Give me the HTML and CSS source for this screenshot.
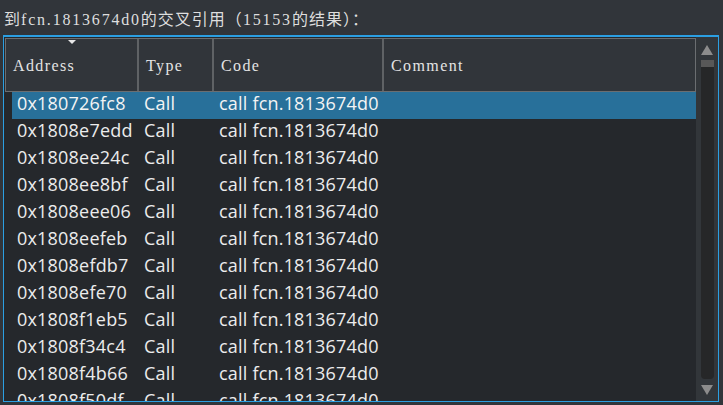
FILE: index.html
```html
<!DOCTYPE html>
<html>
<head>
<meta charset="utf-8">
<link rel="stylesheet" href="styles.css">
</head>
<body>
<div class="title">到<span class="lat">fcn.1813674d0</span>的交叉引用（<span class="lat">15153</span>的结果）：</div>
<div class="frame">
  <div class="table">
    <div class="header">
      <div class="hcell sorted">Address<span class="sort"></span></div>
      <div class="hcell">Type</div>
      <div class="hcell">Code</div>
      <div class="hcell">Comment</div>
    </div>
    <div class="body">
      <div class="row selected"><span>0x180726fc8</span><span>Call</span><span>call fcn.1813674d0</span><span></span></div>
      <div class="row"><span>0x1808e7edd</span><span>Call</span><span>call fcn.1813674d0</span><span></span></div>
      <div class="row"><span>0x1808ee24c</span><span>Call</span><span>call fcn.1813674d0</span><span></span></div>
      <div class="row"><span>0x1808ee8bf</span><span>Call</span><span>call fcn.1813674d0</span><span></span></div>
      <div class="row"><span>0x1808eee06</span><span>Call</span><span>call fcn.1813674d0</span><span></span></div>
      <div class="row"><span>0x1808eefeb</span><span>Call</span><span>call fcn.1813674d0</span><span></span></div>
      <div class="row"><span>0x1808efdb7</span><span>Call</span><span>call fcn.1813674d0</span><span></span></div>
      <div class="row"><span>0x1808efe70</span><span>Call</span><span>call fcn.1813674d0</span><span></span></div>
      <div class="row"><span>0x1808f1eb5</span><span>Call</span><span>call fcn.1813674d0</span><span></span></div>
      <div class="row"><span>0x1808f34c4</span><span>Call</span><span>call fcn.1813674d0</span><span></span></div>
      <div class="row"><span>0x1808f4b66</span><span>Call</span><span>call fcn.1813674d0</span><span></span></div>
      <div class="row"><span>0x1808f50df</span><span>Call</span><span>call fcn.1813674d0</span><span></span></div>
    </div>
  </div>
  <div class="scrollbar">
    <div class="arrow up"></div>
    <div class="track"><div class="thumb"></div></div>
    <div class="arrow down"></div>
  </div>
</div>
</body>
</html>
```
FILE: styles.css
```css
* { box-sizing: border-box; }
html, body { margin: 0; padding: 0; }
body {
  width: 723px;
  height: 405px;
  background: #31353a;
  overflow: hidden;
}
.title {
  height: 36px;
  padding: 4px 0 0 4px;
  line-height: 32px;
  font-family: "Liberation Serif", "Noto Sans CJK SC", serif;
  font-size: 16px;
  letter-spacing: 1px;
  color: #dedede;
  white-space: nowrap;
}
.title .lat { letter-spacing: 1.8px; }
.frame {
  margin-left: 3px;
  width: 716px;
  height: 367px;
  border: 1px solid #2b9fe2;
  border-top-width: 2px;
  margin-top: -1px;
  display: grid;
  grid-template-columns: 1fr 22px;
  background: #25282c;
}
.table {
  display: flex;
  flex-direction: column;
  min-height: 0;
  overflow: hidden;
}
.header {
  margin: 1px 0 0 1px;
  height: 54px;
  flex: none;
  border: 1px solid #6b6e71;
  background: #31353a;
  display: grid;
  grid-template-columns: 131px 75px 170px 1fr;
}
.hcell {
  position: relative;
  display: flex;
  align-items: center;
  padding-left: 7px;
  padding-top: 1px;
  border-left: 2px solid #5f6265;
  font-family: "Liberation Serif", serif;
  font-size: 16px;
  letter-spacing: 1.4px;
  color: #e4e4e4;
}
.hcell:first-child { border-left: none; padding-left: 7px; }
.sort {
  position: absolute;
  top: 1px;
  left: 62px;
  width: 0;
  height: 0;
  border-left: 4px solid transparent;
  border-right: 4px solid transparent;
  border-top: 4px solid #e8e8e8;
}
.body {
  flex: 1;
  min-height: 0;
  overflow: hidden;
  padding-left: 8px;
}
.row {
  display: grid;
  grid-template-columns: 126px 75px 170px 1fr;
  height: 27px;
  padding-bottom: 4px;
  line-height: 23px;
  font-family: "Open Sans", sans-serif;
  font-size: 18px;
  letter-spacing: 0.2px;
  color: #ececec;
  white-space: nowrap;
}
.row span { padding-left: 6px; }
.row span:first-child { padding-left: 5px; }
.row.selected { background: #28709a; color: #f4f4f4; }
.scrollbar {
  background: #32363a;
  display: flex;
  flex-direction: column;
  align-items: center;
  padding: 8px 4px 6px 4px;
}
.arrow {
  width: 0;
  height: 0;
  border-left: 6px solid transparent;
  border-right: 6px solid transparent;
  flex: none;
}
.arrow.up { border-bottom: 10px solid #8c8c8c; margin-bottom: 5px; }
.arrow.down { border-top: 10px solid #8c8c8c; margin-top: 6px; }
.track {
  flex: 1;
  width: 13px;
  background: #262728;
  border-radius: 0 0 4px 4px;
}
.thumb {
  height: 7px;
  background: #585858;
}
```
